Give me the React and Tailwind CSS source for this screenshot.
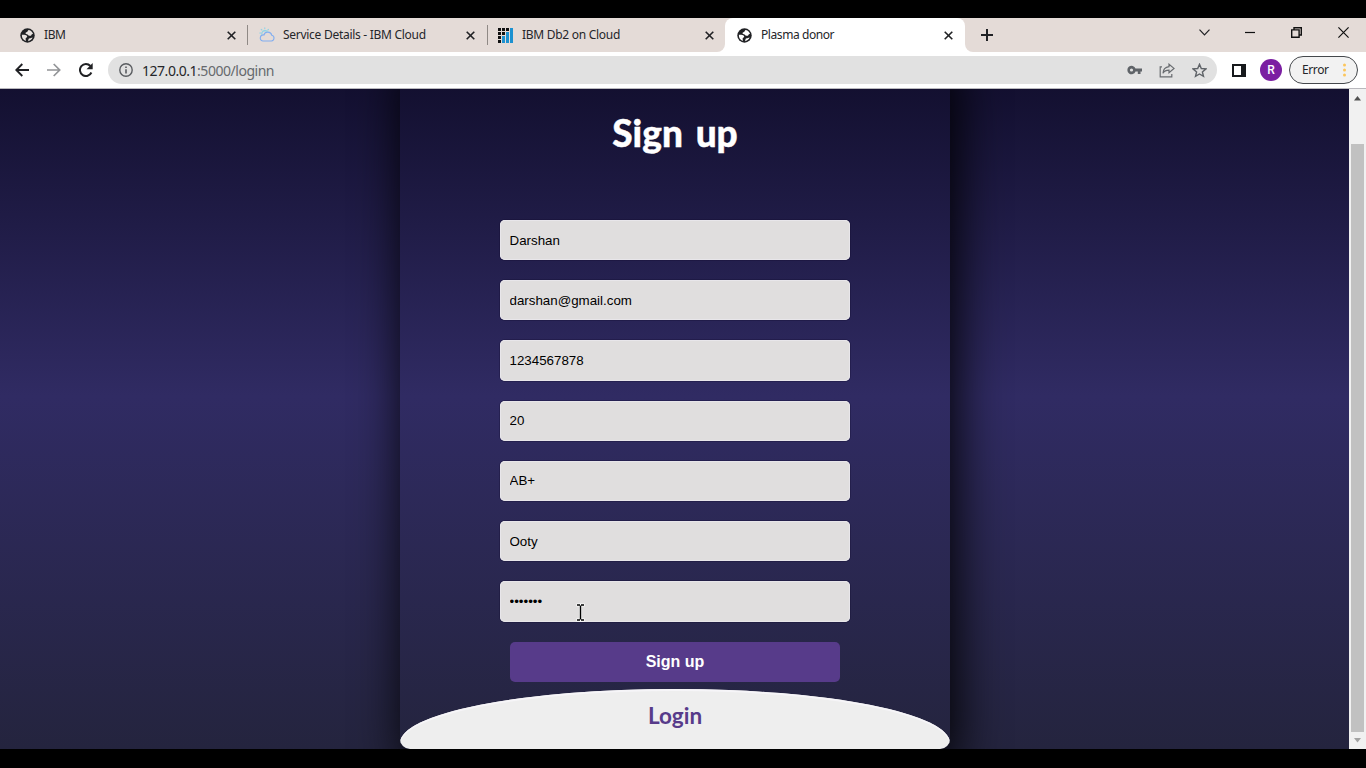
import React from "react";

function Globe({ land }) {
  return (
    <svg className="size-[15px] shrink-0" viewBox="0 0 16 16">
      <circle cx="8" cy="8" r="7.7" fill="#202124" />
      <path d="M2 7.300c2.200-.2 4.300.1 5.300 1 .7.700.4 1.700-.6 2.100-.8.300-.7 1-.6 1.900l.1 1.500C3.600 13 1.700 10.600 2 7.300z" fill={land} />
      <path d="M9.400 2c2.300.5 4.100 2.100 4.500 4.500-.8-.2-1.500.1-1.700.9-.3.900-1.100 1.100-2.200.9C8.400 8.100 8.700 6.900 7.300 6.600 6.200 6.400 5.600 5.800 6 5c.4-.7 1.300-.5 1.800-1.100C8.400 3.200 8.300 2.200 9.400 2z" fill={land} />
      <path d="M9 12.300c.2-1.100 1.200-1.100 2.200-1.300.9-.2 1.500-.7 2.300-.8-.8 2-2.400 3.400-4.700 3.800-.1-.6.1-1.100.2-1.700z" fill={land} />
    </svg>
  );
}

function Cloud() {
  return (
    <svg className="size-4 shrink-0" viewBox="0 0 16 16" fill="none" strokeWidth="1.100" strokeLinecap="round">
      <path d="M3.800 14h8.600a2.900 2.900 0 0 0 .4-5.700A4.100 4.100 0 0 0 4.900 8 3 3 0 0 0 3.800 14z" stroke="#82aef0" />
      <path d="M2.800 7.200A3.300 3.300 0 0 1 6 3.600c1 0 1.700.3 2.300.9M5.800.8v1M2.200 2.300l.7.700M.8 6h.9M9.500 2.300l-.7.700" stroke="#8ed3e6" />
    </svg>
  );
}

function Db2() {
  const dots = [[0, 0], [4, 0], [8, 0], [0, 4], [4, 4], [0, 8], [0, 12]];
  return (
    <svg className="size-[15px] shrink-0" viewBox="0 0 15 15">
      <path d="M12 0h3v15h-3zM8 4h3v11H8zM4 8h3v7H4z" fill="#1c91d0" />
      {dots.map(([x, y]) => (
        <rect key={x + "-" + y} x={x} y={y} width="3" height="3" fill="#111" />
      ))}
    </svg>
  );
}

function X() {
  return (
    <svg className="size-[9px] shrink-0" viewBox="0 0 9 9" stroke="#202124" strokeWidth="1.600">
      <path d="M.7.7l7.600 7.600M8.300.7L.7 8.300" />
    </svg>
  );
}

function Tab({ icon, label, className, textClass }) {
  return (
    <div className={"flex h-[34px] shrink-0 items-center " + className}>
      {icon}
      <span className={"flex-1 whitespace-nowrap text-[12px] text-[#25262a] " + textClass}>{label}</span>
      <X />
    </div>
  );
}

function TabStrip() {
  return (
    <div className="flex h-[34px] bg-[#e4dbd7]">
      <Tab className="w-[247px] pl-5 pr-[11px]" icon={<Globe land="#e8e2df" />} label="IBM" textClass="ml-[9px] tracking-[-0.4px]" />
      <div className="mt-[7px] h-5 w-px bg-[#8f8985]" />
      <Tab className="w-[239px] pl-[11px] pr-[12px]" icon={<Cloud />} label="Service Details - IBM Cloud" textClass="ml-2 tracking-[-0.28px]" />
      <div className="mt-[7px] h-5 w-px bg-[#8f8985]" />
      <div className="w-[237px] bg-white">
        <Tab className="w-full rounded-br-[8px] bg-[#e4dbd7] pl-[10px] pr-[11px]" icon={<Db2 />} label="IBM Db2 on Cloud" textClass="ml-[9px] tracking-[-0.28px]" />
      </div>
      <div className="w-[240px] bg-[#e4dbd7]">
        <Tab className="w-full rounded-t-[8px] bg-white pl-3 pr-[12px]" icon={<Globe land="#ffffff" />} label="Plasma donor" textClass="ml-[9px] tracking-[-0.42px]" />
      </div>
      <div className="flex-1 bg-white">
        <div className="flex h-[34px] items-center rounded-bl-[8px] bg-[#e4dbd7] pl-4">
          <svg className="size-3" viewBox="0 0 12 12" stroke="#202124" strokeWidth="2"><path d="M6 0v12M0 6h12" /></svg>
          <div className="flex-1" />
          <div className="flex items-center pb-[5px] pr-[17px]">
            <svg className="mr-[35px] h-[7px] w-[11px]" viewBox="0 0 11 7" fill="none" stroke="#202124" strokeWidth="1.200"><path d="M.5.7l5 5.200 5-5.200" /></svg>
            <svg className="mr-[36px] h-[11px] w-[10px]" viewBox="0 0 10 11" stroke="#111" strokeWidth="1.200"><path d="M0 5.500h10" /></svg>
            <svg className="mr-[36px] size-[11px]" viewBox="0 0 11 11" fill="none" stroke="#111" strokeWidth="1.400"><path d="M.7 2.900h7.400v7.400H.7zM3 2.900V.7h7.300V8H8.100" /></svg>
            <svg className="size-[11px]" viewBox="0 0 11 11" stroke="#111" strokeWidth="1.200"><path d="M.4.400l10.200 10.200M10.600.4L.4 10.600" /></svg>
          </div>
        </div>
      </div>
    </div>
  );
}

function Toolbar() {
  return (
    <div className="flex h-9 items-center bg-white pl-[15px] pr-2">
      <svg className="size-[14px]" viewBox="0 0 14 14" fill="none" stroke="#202124" strokeWidth="1.900"><path d="M14 7H1.500M7.300 1L1.300 7l6 6" /></svg>
      <svg className="ml-[18px] size-[14px]" viewBox="0 0 14 14" fill="none" stroke="#929497" strokeWidth="1.700"><path d="M0 7h12.500M6.700 1l6 6-6 6" /></svg>
      <svg className="ml-[18px] size-[14px]" viewBox="0 0 14 14"><path d="M12.400 9.500A6 6 0 1 1 11.400 3" fill="none" stroke="#202124" strokeWidth="2" /><path d="M13.700 0v6.200H7.500z" fill="#202124" /></svg>
      <div className="ml-[15px] flex h-7 w-[1109px] items-center rounded-full bg-[#e1e1e1] pl-[11px] pr-[10px]">
        <svg className="size-[14px]" viewBox="0 0 14 14" fill="none" stroke="#5a5d61"><circle cx="7" cy="7" r="6.200" strokeWidth="1.400" /><path d="M7 6.200v4.300M7 3.400v1.600" strokeWidth="1.600" /></svg>
        <span className="ml-[9px] flex-1 text-[14px] tracking-[-0.47px] text-[#66696d]"><span className="text-[#25262a]">127.0.0.1</span>:5000/loginn</span>
        <svg className="mr-[17px] h-[10px] w-[15px]" viewBox="0 0 15 10"><path fillRule="evenodd" d="M8.500 3.600H15v2.800h-1.500V9h-2.700V6.400H8.500a4.200 4.200 0 1 1 0-2.800zM4.500 6.600a1.600 1.600 0 1 0 0-3.200 1.600 1.600 0 0 0 0 3.200z" fill="#5f6368" /></svg>
        <svg className="mr-[17px] h-[15px] w-4" viewBox="0 0 16 15" fill="none" stroke="#696c70" strokeWidth="1.200"><path d="M3 3.800H1.200v10h11.600V11M10 1.200l5 4.200-5 4.200V7.200c-2.900 0-4.700.8-6 3 .2-3.700 2.300-6 6-6.500z" /></svg>
        <svg className="size-[15px]" viewBox="0 0 15 15" fill="none" stroke="#5f6368" strokeWidth="1.400"><path d="M7.500 1.300l1.800 4.200 4.600.4-3.500 3 1.100 4.500-4-2.400-4 2.400 1.100-4.500-3.500-3 4.600-.4z" /></svg>
      </div>
      <svg className="ml-[15px] h-[13px] w-[14px]" viewBox="0 0 14 13"><path d="M1 1h12v11H1z" fill="white" stroke="#17191c" strokeWidth="2" /><path d="M9 0h5v13H9z" fill="#17191c" /></svg>
      <div className="ml-[14px] flex size-[22px] items-center justify-center rounded-full bg-[#7b1fa2] font-['Roboto',sans-serif] text-[12px] font-medium text-white">R</div>
      <div className="ml-[7px] flex h-7 w-[69px] items-center rounded-full border border-[#45484c] bg-[#f2f2f2] pl-[12px] text-[12px] text-[#25262a]">
        <span className="flex-1 tracking-[-0.4px]">Error</span>
        <svg className="mr-[11px] h-[14px] w-[3px]" viewBox="0 0 3 14" fill="#fcc65b"><circle cx="1.500" cy="2" r="1.500" /><circle cx="1.500" cy="7" r="1.500" /><circle cx="1.500" cy="12" r="1.500" /></svg>
      </div>
    </div>
  );
}

const fields = ["Darshan", "darshan@gmail.com", "1234567878", "20", "AB+", "Ooty"];
const fieldClass = "mb-[20px] block h-[40.22px] w-[350px] rounded-[5px] bg-[#e0dede] px-[9.500px] text-[13.333px] text-black outline-none shadow-[0_0_0_1px_rgba(15,10,45,0.3),inset_0_0_0_1px_#e8e6ea]";

function SignupCard() {
  return (
    <main className="ml-[400px] flex h-[705px] w-[550px] flex-col items-center overflow-hidden rounded-[10px] bg-linear-to-b/srgb from-[#0f0c29] via-[#302b63] to-[#24243e] shadow-[5px_20px_50px_#000] font-['Liberation_Sans',Arial,sans-serif]">
      <h1 className="mt-[61px] flex h-[55px] shrink-0 items-center whitespace-nowrap font-['Lato',sans-serif] text-[37px] font-black leading-none text-white [-webkit-text-stroke:0.4px_white] [word-spacing:4px]">Sign up</h1>
      <form className="mt-[60px] flex shrink-0 flex-col items-center" onSubmit={(e) => e.preventDefault()}>
        {fields.map((value) => (
          <input key={value} className={fieldClass} defaultValue={value} />
        ))}
        <input className={fieldClass} type="password" defaultValue="1234567" />
        <button className="h-10 w-[330px] rounded-[5px] bg-[#573b8a] text-[16px] font-bold text-white">Sign up</button>
      </form>
      <div className="mt-[7px] h-[120px] w-[550px] shrink-0 rounded-t-[275px_54px] bg-[#eee] pt-[13px] text-center font-['Lato',sans-serif] text-[22.500px] font-bold leading-[28px] text-[#573b8a] shadow-[inset_0_2px_0_#f6f5f8]">Login</div>
    </main>
  );
}

function Scrollbar() {
  return (
    <div className="flex w-[17px] shrink-0 flex-col items-center bg-[#f1f1f1]">
      <svg className="mt-[7px] h-[5px] w-[7px]" viewBox="0 0 7 5"><path d="M3.500 0L7 4.500H0z" fill="#505050" /></svg>
      <div className="mt-[43px] h-[588px] w-[13px] bg-[#c1c1c1]" />
      <svg className="mt-[6px] h-[5px] w-[7px]" viewBox="0 0 7 5"><path d="M3.500 4.500L7 0H0z" fill="#a3a3a3" /></svg>
    </div>
  );
}

export default function App() {
  return (
    <div className="relative h-[768px] w-[1366px] overflow-hidden bg-black pt-[18px] font-['Noto_Sans','Open_Sans',sans-serif]">
      <TabStrip />
      <Toolbar />
      <div className="h-px bg-[#b9b8bd]" />
      <div className="flex h-[660px] overflow-hidden">
        <div className="h-[660px] flex-1 overflow-hidden">
          <div className="-mt-[45px] flex h-[705px] bg-linear-to-b/srgb from-[#0f0c29] via-[#302b63] to-[#24243e]">
            <SignupCard />
          </div>
        </div>
        <Scrollbar />
      </div>
      <svg className="absolute left-[576px] top-[603px] h-[19px] w-[9px]" viewBox="0 0 9 19" fill="none">
        <path d="M.5 2H8.500M4.500 2v15M.5 17H8.500" stroke="white" strokeWidth="3" />
        <path d="M1 2h3M5 2h3M4.500 2.500v14M1 17h3M5 17h3" stroke="black" strokeWidth="1.500" />
      </svg>
    </div>
  );
}
